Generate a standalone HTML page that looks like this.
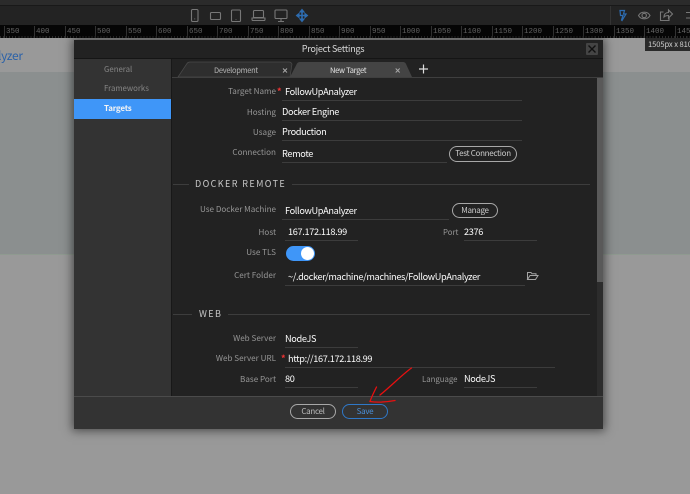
<!DOCTYPE html>
<html><head><meta charset="utf-8">
<style>
html,body{margin:0;padding:0;width:690px;height:494px;overflow:hidden;background:#999;font-family:"Noto Sans CJK SC","Liberation Sans",sans-serif}
.a{position:absolute}
.t{position:absolute;white-space:nowrap;line-height:12px}
.l{position:absolute;white-space:nowrap;line-height:12px;font-size:8.1px;color:#969696;text-align:right;right:414px}
.v{position:absolute;white-space:nowrap;line-height:12px;font-size:9.2px;letter-spacing:-.35px;color:#fafafa}
.u{position:absolute;height:1px;background:#3c3c3c}
.r{position:absolute;top:27px;font:7.5px/10px "Liberation Mono",monospace;color:#666}
.k{position:absolute;top:26px;width:1px;height:12px;background:#333}
.b{position:absolute;box-sizing:border-box;border:1px solid #a8a8a8;border-radius:9px;color:#ccc;font-size:8px;text-align:center;letter-spacing:-.3px;white-space:nowrap}
.h{position:absolute;white-space:nowrap;line-height:12px;font-size:9px;color:#c8c8c8;letter-spacing:1.4px}
.s{position:absolute;height:1px;background:#3d3d3d}
.n{position:absolute;white-space:nowrap;line-height:12px;font-size:7.8px;color:#969696}
</style></head><body>
<div class="a" style="left:0;top:0;width:690px;height:38px;background:#232323"></div>
<div class="a" style="left:0;top:0;width:690px;height:5px;background:#2b2b2b"></div>
<div class="a" style="left:0;top:5px;width:690px;height:1px;background:#191919"></div>
<div class="a" style="left:0;top:25px;width:690px;height:13px;background:#060606"></div>
<div class="a" style="left:0;top:36px;width:690px;height:2px;background:repeating-linear-gradient(90deg,#2c2c2c 0 1px,transparent 1px 3.05px)"></div>
<div class="a" style="left:610px;top:6px;width:1px;height:19px;background:#333"></div>

<svg class="a" style="left:0;top:0" width="690" height="26" fill="none" stroke="#777" stroke-width="1.100">
<rect x="191.500" y="9.500" width="6.500" height="12" rx="1.200"/><path d="M194.700 18.500v.8"/>
<rect x="210.500" y="12.500" width="10" height="7" rx="1"/>
<rect x="231.500" y="10" width="9" height="11.500" rx="1"/><path d="M236 19v.6"/>
<path d="M254.500 10.500h8a1 1 0 0 1 1 1v6h-10v-6a1 1 0 0 1 1-1zM252 18h13v1.500a1 1 0 0 1-1 1h-11a1 1 0 0 1-1-1z"/>
<rect x="275" y="10" width="12" height="8.500" rx="1"/><path d="M281 18.500v2.500M278 21.500h6"/>
<path d="M302 10v11M296.500 15.500h11" stroke="#2d6cb0" stroke-width="1.600"/>
<path d="M300 12l2-2.500 2 2.500zM300 19l2 2.500 2-2.500zM299 13.500l-2.500 2 2.500 2zM305 13.500l2.500 2-2.500 2z" fill="#2d6cb0" stroke="#2d6cb0"/>
<path d="M620 10.500h4.500l-1 3.500h2.500l-4 6.500-.5-.5 1.500-4.500h-2.500z" stroke="#2d6cb0" stroke-width="1.200"/>
<path d="M638.500 15.500c2.500-4.500 9-4.500 11.500 0-2.500 4.500-9 4.500-11.500 0z"/><circle cx="644.200" cy="15.500" r="2.200"/>
<path d="M669 18v2.500h-8.500v-8.500h3M664 17c0-3 2-4.500 4.500-4.500v-2.500l4 4-4 4v-2.500c-2 0-3.500 .5-4.500 1.500z"/>
<path d="M686 12.500h4M686 18h4" />
</svg>

<div class="k" style="left:4px"></div><div class="r" style="left:6px">350</div>
<div class="k" style="left:34px"></div><div class="r" style="left:36px">400</div>
<div class="k" style="left:65px"></div><div class="r" style="left:67px">450</div>
<div class="k" style="left:95px"></div><div class="r" style="left:97px">500</div>
<div class="k" style="left:126px"></div><div class="r" style="left:128px">550</div>
<div class="k" style="left:156px"></div><div class="r" style="left:158px">600</div>
<div class="k" style="left:187px"></div><div class="r" style="left:189px">650</div>
<div class="k" style="left:217px"></div><div class="r" style="left:219px">700</div>
<div class="k" style="left:248px"></div><div class="r" style="left:250px">750</div>
<div class="k" style="left:278px"></div><div class="r" style="left:280px">800</div>
<div class="k" style="left:309px"></div><div class="r" style="left:311px">850</div>
<div class="k" style="left:339px"></div><div class="r" style="left:341px">900</div>
<div class="k" style="left:370px"></div><div class="r" style="left:372px">950</div>
<div class="k" style="left:400px"></div><div class="r" style="left:402px">1000</div>
<div class="k" style="left:431px"></div><div class="r" style="left:433px">1050</div>
<div class="k" style="left:461px"></div><div class="r" style="left:463px">1100</div>
<div class="k" style="left:492px"></div><div class="r" style="left:494px">1150</div>
<div class="k" style="left:522px"></div><div class="r" style="left:524px">1200</div>
<div class="k" style="left:553px"></div><div class="r" style="left:555px">1250</div>
<div class="k" style="left:583px"></div><div class="r" style="left:585px">1300</div>
<div class="k" style="left:614px"></div><div class="r" style="left:616px">1350</div>
<div class="k" style="left:644px"></div><div class="r" style="left:646px">1400</div>
<div class="k" style="left:675px"></div><div class="r" style="left:677px">1450</div>

<div class="a" style="left:0;top:38px;width:690px;height:34px;background:#999"></div>
<div class="a" style="left:0;top:72px;width:690px;height:183px;background:#8b8f8f"></div>
<div class="a" style="left:0;top:255px;width:690px;height:239px;background:#999"></div>
<div class="a" style="left:0;top:254px;width:690px;height:1px;background:#8f9a90"></div>
<div class="t" style="left:-2px;top:50px;font-size:12px;letter-spacing:-.3px;color:#2c62a8">lyzer</div>
<div class="a" style="left:645px;top:38px;width:45px;height:13px;background:#2a2a2a"></div>
<div class="t" style="left:648px;top:39px;font-size:7.6px;letter-spacing:-.1px;color:#cfcfcf">1505px x 810</div>

<!-- modal -->
<div class="a" style="left:74px;top:40px;width:529px;height:389px;background:#222;box-shadow:0 0 9px 2px rgba(0,0,0,.5)"></div>
<div class="t" style="left:75px;top:42px;width:516px;text-align:center;font-size:9.2px;letter-spacing:-.3px;color:#d6d6d6">Project Settings</div>
<div class="a" style="left:74px;top:58px;width:529px;height:1px;background:#151515"></div>
<div class="a" style="left:586px;top:43px;width:12px;height:12px;background:#444;border-radius:1px"></div>
<svg class="a" style="left:586px;top:43px" width="12" height="12" fill="none" stroke="#111" stroke-width="1.400"><path d="M2.500 2.500l7 7M9.500 2.500l-7 7"/></svg>

<!-- sidebar -->
<div class="a" style="left:74px;top:59px;width:97px;height:337px;background:#333"></div>
<div class="a" style="left:171px;top:59px;width:1px;height:337px;background:#181818"></div>
<div class="n" style="left:104px;top:64px;color:#868686">General</div>
<div class="n" style="left:104px;top:83px;color:#868686">Frameworks</div>
<div class="a" style="left:74px;top:99px;width:97px;height:20px;background:#3f96f8"></div>
<div class="t" style="left:104px;top:103px;font-size:8px;letter-spacing:-.2px;font-weight:bold;color:#f4f4f4">Targets</div>

<!-- tabs -->
<svg class="a" style="left:172px;top:59px" width="431" height="20">
<path d="M6 18L15 4.500Q16 3 18 3H117Q119 3 120 5L118 18Z" fill="#2e2e2e" stroke="#4a4a4a" stroke-width=".7"/>
<path d="M118 18L125 4.500Q126 3 128 3H231Q233 3 234 5L240 18Z" fill="#444"/>
<path d="M0 18.500H431" stroke="#3f3f3f" stroke-width="1"/>
<path d="M247 10H256M251.500 5.500V14.500" stroke="#ddd" stroke-width="1.200"/>
<path d="M111 9.500l4 4M115 9.500l-4 4M223.700 9.500l4 4M227.700 9.500l-4 4" stroke="#aaa" stroke-width=".9"/>
</svg>
<div class="t" style="left:214px;top:65px;font-size:7.500px;letter-spacing:-.3px;color:#b4b4b4">Development</div>
<div class="t" style="left:330px;top:65px;font-size:7.500px;letter-spacing:-.3px;color:#e6e6e6">New Target</div>

<!-- scrollbar -->
<div class="a" style="left:597px;top:78px;width:6px;height:318px;background:#2c2c2c"></div>
<div class="a" style="left:597px;top:78px;width:6px;height:204px;background:#595959"></div>

<!-- rows -->
<div class="l" style="top:86px">Target Name</div><div class="t" style="left:277px;top:86px;color:#e33;font-size:9px;font-weight:bold">*</div>
<div class="v" style="left:285px;top:85px">FollowUpAnalyzer</div><div class="u" style="left:282px;top:100px;width:240px"></div>
<div class="l" style="top:107px">Hosting</div><div class="v" style="left:282px;top:105px">Docker Engine</div><div class="u" style="left:282px;top:120px;width:240px"></div>
<div class="l" style="top:127px">Usage</div><div class="v" style="left:282px;top:125px">Production</div><div class="u" style="left:282px;top:140px;width:240px"></div>
<div class="l" style="top:147px">Connection</div><div class="v" style="left:282px;top:147px">Remote</div><div class="u" style="left:282px;top:162px;width:165px"></div>
<div class="b" style="left:449px;top:146px;width:68px;height:16px;line-height:14px">Test Connection</div>

<div class="s" style="left:173px;top:184px;width:16px"></div>
<div class="h" style="left:195px;top:178px">DOCKER REMOTE</div>
<div class="s" style="left:292px;top:184px;width:298px"></div>

<div class="l" style="top:204px">Use Docker Machine</div><div class="v" style="left:285px;top:204px">FollowUpAnalyzer</div><div class="u" style="left:282px;top:219px;width:167px"></div>
<div class="b" style="left:452px;top:203px;width:46px;height:15px;line-height:13px">Manage</div>
<div class="l" style="top:227px">Host</div><div class="v" style="left:288px;top:225px">167.172.118.99</div><div class="u" style="left:285px;top:240px;width:73px"></div>
<div class="n" style="left:443px;top:227px">Port</div><div class="v" style="left:464px;top:225px">2376</div><div class="u" style="left:464px;top:240px;width:73px"></div>
<div class="l" style="top:247px">Use TLS</div>
<div class="a" style="left:286px;top:246px;width:29px;height:15px;border-radius:8px;background:#3f96f8"></div>
<div class="a" style="left:301px;top:247px;width:13px;height:13px;border-radius:50%;background:#fff"></div>
<div class="l" style="top:270px">Cert Folder</div><div class="v" style="left:288px;top:270px">~/.docker/machine/machines/FollowUpAnalyzer</div><div class="u" style="left:285px;top:285px;width:240px"></div>
<svg class="a" style="left:526px;top:271px" width="13" height="10" fill="none" stroke="#a5a5a5" stroke-width="1"><path d="M1.500 8.500V1.500H5l1 1.300h4V4.500M1.500 8.500H9.500L12 4.500H4z"/></svg>

<div class="s" style="left:173px;top:314px;width:19px"></div>
<div class="h" style="left:199px;top:308px">WEB</div>
<div class="s" style="left:228px;top:314px;width:362px"></div>

<div class="l" style="top:333px">Web Server</div><div class="v" style="left:285px;top:332px">NodeJS</div><div class="u" style="left:285px;top:347px;width:73px"></div>
<div class="l" style="top:353px">Web Server URL</div><div class="t" style="left:281px;top:353px;color:#e33;font-size:9px;font-weight:bold">*</div>
<div class="v" style="left:288px;top:352px">http://167.172.118.99</div><div class="u" style="left:285px;top:367px;width:270px"></div>
<div class="l" style="top:374px">Base Port</div><div class="v" style="left:285px;top:372px">80</div><div class="u" style="left:285px;top:387px;width:73px"></div>
<div class="n" style="left:422px;top:374px">Language</div><div class="v" style="left:464px;top:372px">NodeJS</div><div class="u" style="left:464px;top:387px;width:73px"></div>

<!-- footer -->
<div class="a" style="left:74px;top:396px;width:529px;height:33px;background:#333;border-top:1px solid #4b4b4b;box-sizing:border-box"></div>
<div class="b" style="left:290px;top:404px;width:46px;height:15px;line-height:13px;color:#bbb">Cancel</div>
<div class="b" style="left:342px;top:404px;width:46px;height:15px;line-height:13px;border-color:#2f78c8;color:#4a8fd8">Save</div>

<svg class="a" style="left:360px;top:360px" width="60" height="50" fill="none" stroke="#e81010" stroke-width="1.300" stroke-linecap="round">
<path d="M51.500 8C44 13 30 27 20 35M16.500 27C14 32 11.500 37 10 41.500C17 42.500 27 42 35 40.500"/>
</svg>
</body></html>
